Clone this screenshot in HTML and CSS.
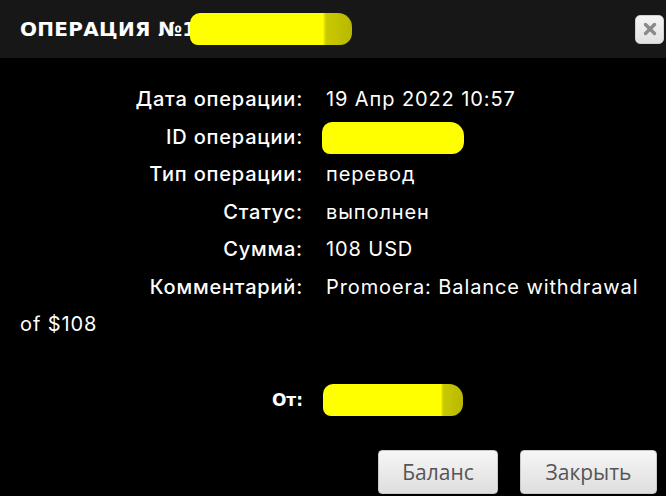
FILE: index.html
```html
<!DOCTYPE html>
<html lang="ru">
  <head>
    <meta charset="utf-8">
    <title>Операция</title>
    <link rel="stylesheet" href="styles.css">
  </head>
  <body>
    <div class="dialog">
      <div class="titlebar">
        <span class="title">ОПЕРАЦИЯ №1</span>
        <span class="redact redact-title"></span>
        <button class="close-btn" title="Закрыть">
          <svg width="14" height="14" viewBox="0 0 14 14">
            <path d="M2.5 2.5 L11.5 11.5 M11.5 2.5 L2.5 11.5" stroke="#8a8a8a" stroke-width="3.4" stroke-linecap="round"/>
          </svg>
        </button>
      </div>

      <div class="content">
        <div class="row"><span class="label">Дата операции:</span><span class="value">19 Апр 2022 10:57</span></div>
        <div class="row"><span class="label">ID операции:</span><span class="value"><span class="redact redact-id"></span></span></div>
        <div class="row"><span class="label">Тип операции:</span><span class="value">перевод</span></div>
        <div class="row"><span class="label">Статус:</span><span class="value">выполнен</span></div>
        <div class="row"><span class="label">Сумма:</span><span class="value">108 USD</span></div>
        <div class="row"><span class="label">Комментарий:</span><span class="value">Promoera: Balance withdrawal of $108</span></div>

        <div class="row from-row"><span class="label from-label">От:</span><span class="value"><span class="redact redact-from"></span></span></div>
      </div>

      <div class="buttons">
        <button class="dlg-btn btn-balance">Баланс</button>
        <button class="dlg-btn btn-close">Закрыть</button>
      </div>
    </div>
  </body>
</html>
```

FILE: styles.css
```css
body {
  margin: 0;
  background: #000;
  font-family: Inter, "Noto Sans", sans-serif;
}

.dialog {
  width: 666px;
  height: 496px;
  background: #000;
  overflow: hidden;
}

/* title bar */
.titlebar {
  height: 58px;
  background: #171717;
  display: flex;
  align-items: center;
  padding: 0 2px 0 20px;
}
.title {
  color: #fff;
  font-family: "DejaVu Sans", sans-serif;
  font-weight: bold;
  font-size: 20px;
  letter-spacing: 0.3px;
}
.close-btn {
  margin-left: auto;
  width: 29px;
  height: 29px;
  border: 1px solid #d0d0d0;
  border-radius: 5px;
  background: linear-gradient(#f4f4f4, #e2e2e2);
  display: flex;
  align-items: center;
  justify-content: center;
  padding: 0;
  cursor: pointer;
}

/* redacted parts */
.redact {
  display: inline-block;
  background: #ffff00;
  border-radius: 10px 14px 12px 8px;
  vertical-align: middle;
}
.redact-title {
  width: 162px;
  height: 32px;
  margin-left: -6px;
  background: linear-gradient(90deg, #ffff00 0%, #ffff00 82%, #c9c900 84%, #b8b800 100%);
}
.redact-id {
  width: 142px;
  height: 32px;
  margin-left: -4px;
}
.redact-from {
  width: 140px;
  height: 32px;
  margin-left: -3px;
  background: linear-gradient(90deg, #ffff00 0%, #ffff00 84%, #c9c900 86%, #b8b800 100%);
}

/* details */
.content {
  padding: 23px 20px 0 20px;
}
.row {
  line-height: 37.5px;
  font-size: 20px;
  color: #fff;
}
.label {
  display: inline-block;
  width: 283px;
  text-align: right;
  font-weight: 500;
  letter-spacing: 0.8px;
}
.value {
  margin-left: 23px;
  letter-spacing: 0.9px;
}
.from-row {
  margin-top: 37px;
}
.from-label {
  font-family: "DejaVu Sans", sans-serif;
  font-weight: bold;
  font-size: 17px;
  letter-spacing: 0;
}

/* buttons */
.buttons {
  display: flex;
  justify-content: flex-end;
  gap: 22px;
  padding-right: 9px;
  margin-top: 31px;
}
.dlg-btn {
  height: 44px;
  border: 1px solid #c8c8c8;
  border-radius: 4px;
  background: linear-gradient(#f6f6f6, #dedede);
  color: #555;
  font-family: "Open Sans", sans-serif;
  font-size: 21px;
  cursor: pointer;
}
.btn-balance {
  width: 120px;
}
.btn-close {
  width: 137px;
}
```
